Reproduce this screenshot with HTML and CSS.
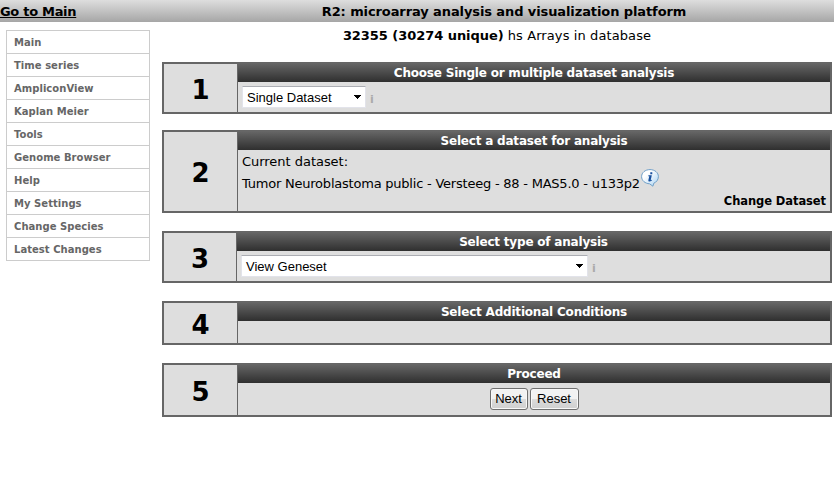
FILE: index.html
```html
<!DOCTYPE html>
<html lang="en">
<head>
<meta charset="utf-8">
<title>R2: microarray analysis and visualization platform</title>
<link rel="stylesheet" href="styles.css">
</head>
<body>
<header class="topbar">
  <a class="home" href="#">Go to Main</a>
  <h1 class="title">R2: microarray analysis and visualization platform</h1>
</header>
<div class="layout">
  <nav class="menu">
    <a href="#">Main</a>
    <a href="#">Time series</a>
    <a href="#">AmpliconView</a>
    <a href="#">Kaplan Meier</a>
    <a href="#">Tools</a>
    <a href="#">Genome Browser</a>
    <a href="#">Help</a>
    <a href="#">My Settings</a>
    <a href="#">Change Species</a>
    <a href="#">Latest Changes</a>
  </nav>
  <main class="content">
    <p class="summary"><b>32355 (30274 unique)</b> <span>hs Arrays in database</span></p>
    <section class="step step-1">
      <div class="number">1</div>
      <div class="panel">
        <h2>Choose Single or multiple dataset analysis</h2>
        <div class="field"><div class="select">Single Dataset<svg class="arrow" viewBox="0 0 7 4"><path d="M0 0h7v1H6v1H5v1H4v1H3V3H2V2H1V1H0z"/></svg></div><span class="hint">i</span></div>
      </div>
    </section>
    <section class="step step-2">
      <div class="number">2</div>
      <div class="panel">
        <h2>Select a dataset for analysis</h2>
        <div class="dataset">
          <div class="label">Current dataset:</div>
          <div class="current"><span>Tumor Neuroblastoma public - Versteeg - 88 - MAS5.0 - u133p2</span><svg class="info" viewBox="0 0 18 18"><defs><linearGradient id="bubble" x1="0" y1="0" x2="1" y2="1"><stop offset=".3" stop-color="#fff"/><stop offset="1" stop-color="#a9d3f3"/></linearGradient></defs><path d="M9 .6c4.8 0 8.400 3 8.400 7 0 3.200-2.200 5.700-4.600 6.600l-.9 3-3.300-2.400C4 14.500.6 11.600.6 7.600c0-4 3.600-7 8.400-7z" fill="url(#bubble)" stroke="#6f9fc8"/><path d="M9.300 3.200h2v2h-2zM7.500 6.200h3.300l-1.100 5 1.300-.4-.3 1c-2 1.200-3.700.9-3.300-.8l.9-3.800H7.200z" fill="#174f9e"/></svg></div>
          <a class="change" href="#">Change Dataset</a>
        </div>
      </div>
    </section>
    <section class="step step-3">
      <div class="number">3</div>
      <div class="panel">
        <h2>Select type of analysis</h2>
        <div class="field"><div class="select wide">View Geneset<svg class="arrow" viewBox="0 0 7 4"><path d="M0 0h7v1H6v1H5v1H4v1H3V3H2V2H1V1H0z"/></svg></div><span class="hint">i</span></div>
      </div>
    </section>
    <section class="step step-4">
      <div class="number">4</div>
      <div class="panel"><h2>Select Additional Conditions</h2></div>
    </section>
    <section class="step step-5">
      <div class="number">5</div>
      <div class="panel">
        <h2>Proceed</h2>
        <div class="actions"><button class="next">Next</button><button class="reset">Reset</button></div>
      </div>
    </section>
  </main>
</div>
</body>
</html>
```
FILE: styles.css
```css
* { box-sizing: border-box; }
body { margin: 0; background: #fff; color: #000; font: 13px/16px Verdana, "DejaVu Sans", sans-serif; letter-spacing: -.1px; }
a { color: inherit; text-decoration: none; }
h1, h2, p { margin: 0; font-size: 13px; }
.topbar { display: grid; grid-template-columns: 174px 1fr; height: 22px; padding-top: 3px; background: linear-gradient(#dedede, #a6a6a6); font-weight: bold; line-height: 17px; }
.home { justify-self: start; text-decoration: underline; letter-spacing: -.3px; }
.title { text-align: center; line-height: 17px; }
.layout { display: grid; grid-template-columns: 144px 670px; column-gap: 12px; padding-left: 6px; }
.menu { align-self: start; margin-top: 8px; border: 1px solid #ccc; border-bottom: 0; }
.menu a { display: block; height: 23px; padding-left: 7px; border-bottom: 1px solid #ccc; color: #666; font-size: 10px; font-weight: bold; line-height: 24px; letter-spacing: .04px; }
.summary { height: 40px; padding-top: 6px; text-align: center; letter-spacing: -.05px; }
.summary span { letter-spacing: .1px; }
.step { display: grid; grid-template-columns: 74px 1fr; border: 2px solid #666; background: #dedede; margin-bottom: 18px; }
.number { display: flex; align-items: center; justify-content: center; border-right: 1px solid #666; font-size: 26px; font-weight: bold; padding-top: 3px; }
.step-1 { height: 52px; margin-bottom: 16px; }
.step-2 { height: 83px; }
.step-3 { height: 52px; grid-template-columns: 73px 1fr; }
.step-4 { height: 44px; }
.step-5 { height: 54px; }
h2 { height: 18px; background: linear-gradient(#646464, #2f2f2f); color: #fff; text-align: center; font-size: 12px; line-height: 19px; letter-spacing: -.2px; }
.field { display: flex; padding: 4px 0 0 4px; }
.select { display: flex; align-items: center; justify-content: space-between; width: 124px; height: 22px; padding: 0 4px; border: 1px solid #e2e3ea; border-top-color: #abadb3; background: #fff; font: 13px "Liberation Sans", Arial, sans-serif; letter-spacing: 0; }
.wide { width: 347px; }
.arrow { width: 7px; height: 4px; }
.hint { margin: 6px 0 0 4px; color: #aaa; font-size: 11px; font-weight: bold; }
.dataset { padding: 4px 4px 0; }
.label { line-height: 16px; letter-spacing: -.03px; }
.current { display: flex; height: 24px; line-height: 28px; letter-spacing: -.22px; }
.info { width: 18px; height: 18px; margin: -1px 0 0 1px; }
.change { display: block; text-align: right; font-size: 11.5px; font-weight: bold; line-height: 14px; letter-spacing: -.08px; }
.actions { display: flex; justify-content: center; gap: 2px; padding-top: 5px; }
button { height: 22px; padding: 0 0 1px; border: 1px solid #707070; border-radius: 3px; background: linear-gradient(#f2f2f2 50%, #dcdcdc 50%, #cfcfcf); box-shadow: inset 0 0 0 1px #f8f8f8; color: #000; font: 13px "Liberation Sans", Arial, sans-serif; }
.next { width: 38px; }
.reset { width: 49px; }
```
